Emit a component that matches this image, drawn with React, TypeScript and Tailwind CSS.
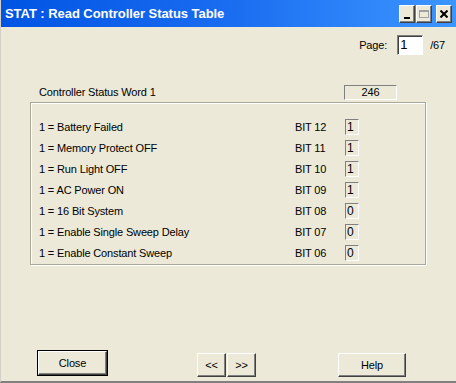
const rows = [
  { label: "1 = Battery Failed", bit: "BIT 12", value: "1" },
  { label: "1 = Memory Protect OFF", bit: "BIT 11", value: "1" },
  { label: "1 = Run Light OFF", bit: "BIT 10", value: "1" },
  { label: "1 = AC Power ON", bit: "BIT 09", value: "1" },
  { label: "1 = 16 Bit System", bit: "BIT 08", value: "0" },
  { label: "1 = Enable Single Sweep Delay", bit: "BIT 07", value: "0" },
  { label: "1 = Enable Constant Sweep", bit: "BIT 06", value: "0" },
];

function TitleButton({ children, disabled }: { children: React.ReactNode; disabled?: boolean }) {
  return (
    <div
      className={`flex h-[18px] w-[16px] items-center justify-center border border-t-white border-l-white border-r-[#404040] border-b-[#404040] bg-[#ece9d8] shadow-[inset_-1px_-1px_0_#808080] ${
        disabled ? "text-[#a0a0a0]" : "text-black"
      }`}
    >
      {children}
    </div>
  );
}

function Button({ children, isDefault, className }: { children: React.ReactNode; isDefault?: boolean; className?: string }) {
  return (
    <button
      className={`flex items-center justify-center bg-[#ece9d8] text-black border border-t-white border-l-white border-r-[#404040] border-b-[#404040] shadow-[inset_-1px_-1px_0_#808080] ${
        isDefault ? "outline outline-1 outline-black" : ""
      } ${className ?? ""}`}
    >
      {children}
    </button>
  );
}

export default function App() {
  return (
    <div
      className="flex h-[383px] w-[456px] flex-col overflow-hidden border-b-2 border-l border-b-[#808080] border-l-[#d4d0c8] bg-[#ece9d8] text-[11px] tracking-[-0.15px] text-black"
      style={{ fontFamily: '"Liberation Sans", Arial, sans-serif' }}
    >
      {/* title bar */}
      <div className="flex h-[27px] shrink-0 items-center justify-between bg-gradient-to-r from-[#0054e3] via-[#1a6cf0] to-[#3c96ff] pl-[4px] pr-[4px]">
        <span className="text-[13px] font-bold tracking-[-0.05px] text-white">STAT : Read Controller Status Table</span>
        <div className="flex items-center gap-[1px]">
          <TitleButton>
            <div className="mt-[8px] h-[2px] w-[6px] bg-black" />
          </TitleButton>
          <TitleButton disabled>
            <div className="h-[8px] w-[10px] border border-t-2 border-[#a0a0a0]" />
          </TitleButton>
          <div className="w-[2px]" />
          <TitleButton>
            <svg width="8" height="8" viewBox="0 0 8 8">
              <path d="M0.5 0.5 L7.5 7.5 M7.5 0.5 L0.5 7.5" stroke="black" strokeWidth="2" />
            </svg>
          </TitleButton>
        </div>
      </div>

      {/* body */}
      <div className="flex flex-1 flex-col">
        <div className="mt-[8px] flex items-center justify-end pr-[11px]">
          <span className="mr-[10px]">Page:</span>
          <div className="flex h-[20px] w-[26px] items-center border border-t-[#808080] border-l-[#808080] border-r-white border-b-white bg-white pl-[2px] text-[13px] shadow-[inset_1px_1px_0_#404040]">
            1
          </div>
          <span className="ml-[7px]">/67</span>
        </div>

        <div className="mt-[29px] flex items-center pl-[38px]">
          <span className="flex-1">Controller Status Word 1</span>
          <div className="mr-[59px] flex h-[15px] w-[53px] items-center justify-center border border-t-[#808080] border-l-[#808080] border-r-white border-b-white">
            246
          </div>
        </div>

        <div className="ml-[29px] mr-[30px] mt-[1px] flex flex-col border border-[#aca899] pl-[8px] pt-[14px] shadow-[inset_1px_1px_0_#fff,1px_1px_0_#fff]">
          {rows.map((r) => (
            <div key={r.bit} className="flex h-[21px] items-center">
              <span className="w-[256px]">{r.label}</span>
              <span className="w-[50px]">{r.bit}</span>
              <div className="flex h-[16px] w-[14px] items-center border border-t-[#808080] border-l-[#808080] border-r-white border-b-white pl-[1px] text-[12px]">
                {r.value}
              </div>
            </div>
          ))}
        </div>

        <div className="mt-auto mb-[4px] flex items-end pl-[37px]">
          <Button isDefault className="mb-[2px] h-[24px] w-[69px]">
            Close
          </Button>
          <div className="ml-[90px] flex gap-[1px]">
            <Button className="h-[24px] w-[29px]">&lt;&lt;</Button>
            <Button className="h-[24px] w-[29px]">&gt;&gt;</Button>
          </div>
          <Button className="ml-[82px] h-[24px] w-[68px]">Help</Button>
        </div>
      </div>
    </div>
  );
}
